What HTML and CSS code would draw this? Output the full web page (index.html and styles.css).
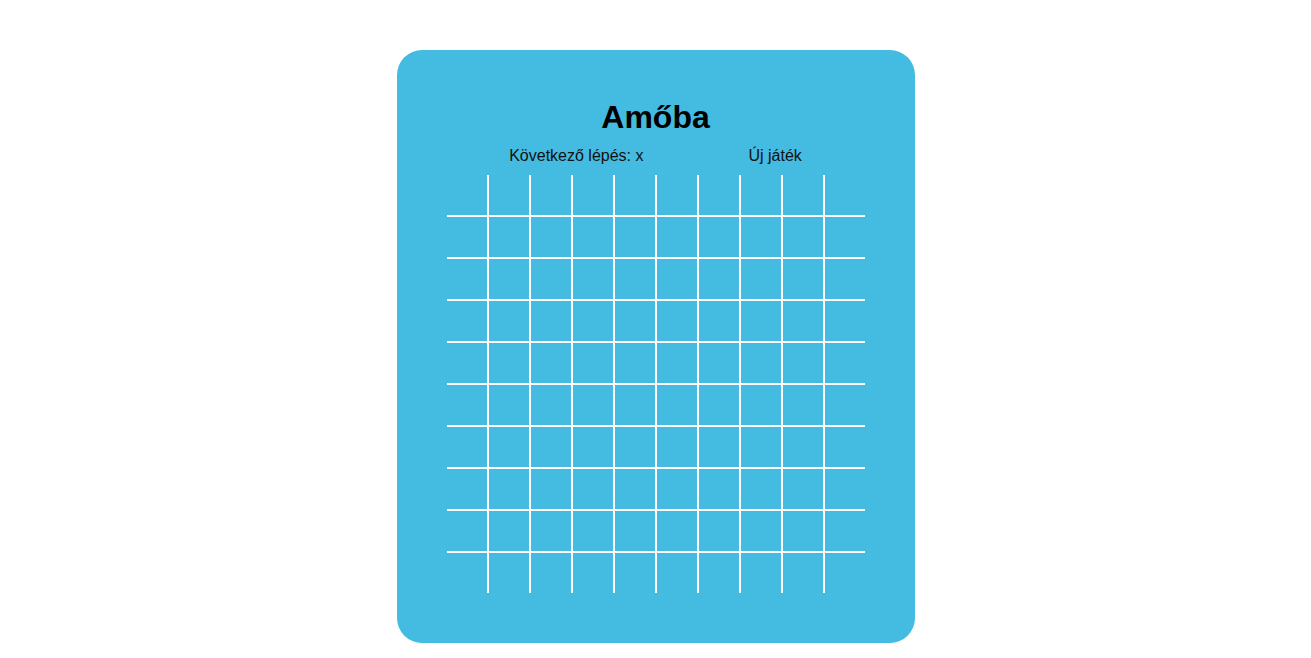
FILE: index.html
```html
<!DOCTYPE html>
<html lang="hu">
<head>
<meta charset="utf-8">
<title>Amőba</title>
<link rel="stylesheet" href="styles.css">
</head>
<body>
<main class="card">
  <h1 class="title">Amőba</h1>
  <div class="info">
    <span class="next">Következő lépés: x</span>
    <span class="new-game">Új játék</span>
  </div>
  <div class="board">
    <div class="cell"></div><div class="cell"></div><div class="cell"></div><div class="cell"></div><div class="cell"></div><div class="cell"></div><div class="cell"></div><div class="cell"></div><div class="cell"></div><div class="cell"></div>
    <div class="cell"></div><div class="cell"></div><div class="cell"></div><div class="cell"></div><div class="cell"></div><div class="cell"></div><div class="cell"></div><div class="cell"></div><div class="cell"></div><div class="cell"></div>
    <div class="cell"></div><div class="cell"></div><div class="cell"></div><div class="cell"></div><div class="cell"></div><div class="cell"></div><div class="cell"></div><div class="cell"></div><div class="cell"></div><div class="cell"></div>
    <div class="cell"></div><div class="cell"></div><div class="cell"></div><div class="cell"></div><div class="cell"></div><div class="cell"></div><div class="cell"></div><div class="cell"></div><div class="cell"></div><div class="cell"></div>
    <div class="cell"></div><div class="cell"></div><div class="cell"></div><div class="cell"></div><div class="cell"></div><div class="cell"></div><div class="cell"></div><div class="cell"></div><div class="cell"></div><div class="cell"></div>
    <div class="cell"></div><div class="cell"></div><div class="cell"></div><div class="cell"></div><div class="cell"></div><div class="cell"></div><div class="cell"></div><div class="cell"></div><div class="cell"></div><div class="cell"></div>
    <div class="cell"></div><div class="cell"></div><div class="cell"></div><div class="cell"></div><div class="cell"></div><div class="cell"></div><div class="cell"></div><div class="cell"></div><div class="cell"></div><div class="cell"></div>
    <div class="cell"></div><div class="cell"></div><div class="cell"></div><div class="cell"></div><div class="cell"></div><div class="cell"></div><div class="cell"></div><div class="cell"></div><div class="cell"></div><div class="cell"></div>
    <div class="cell"></div><div class="cell"></div><div class="cell"></div><div class="cell"></div><div class="cell"></div><div class="cell"></div><div class="cell"></div><div class="cell"></div><div class="cell"></div><div class="cell"></div>
    <div class="cell"></div><div class="cell"></div><div class="cell"></div><div class="cell"></div><div class="cell"></div><div class="cell"></div><div class="cell"></div><div class="cell"></div><div class="cell"></div><div class="cell"></div>
  </div>
</main>
</body>
</html>
```

FILE: styles.css
```css
html, body {
  margin: 0;
  padding: 0;
  background: #ffffff;
  font-family: "Liberation Sans", Arial, sans-serif;
}

body {
  display: flex;
  justify-content: center;
  padding-top: 50px;
}

.card {
  width: 518px;
  height: 593px;
  box-sizing: border-box;
  background: #44bbe0;
  border-radius: 25px;
  padding: 49px 50px 50px;
  display: flex;
  flex-direction: column;
  align-items: center;
}

.title {
  margin: 0;
  font-size: 32px;
  font-weight: bold;
  line-height: 37px;
  color: #000;
}

.info {
  margin-top: 11px;
  display: flex;
  justify-content: center;
  gap: 105px;
  font-size: 16px;
  line-height: 18px;
  color: #111;
}

.board {
  margin-top: 10px;
  display: grid;
  grid-template-columns: repeat(10, 40px);
  grid-template-rows: repeat(10, 40px);
  gap: 2px;
  background: #ffffff;
}

.cell {
  background: #44bbe0;
}
```
